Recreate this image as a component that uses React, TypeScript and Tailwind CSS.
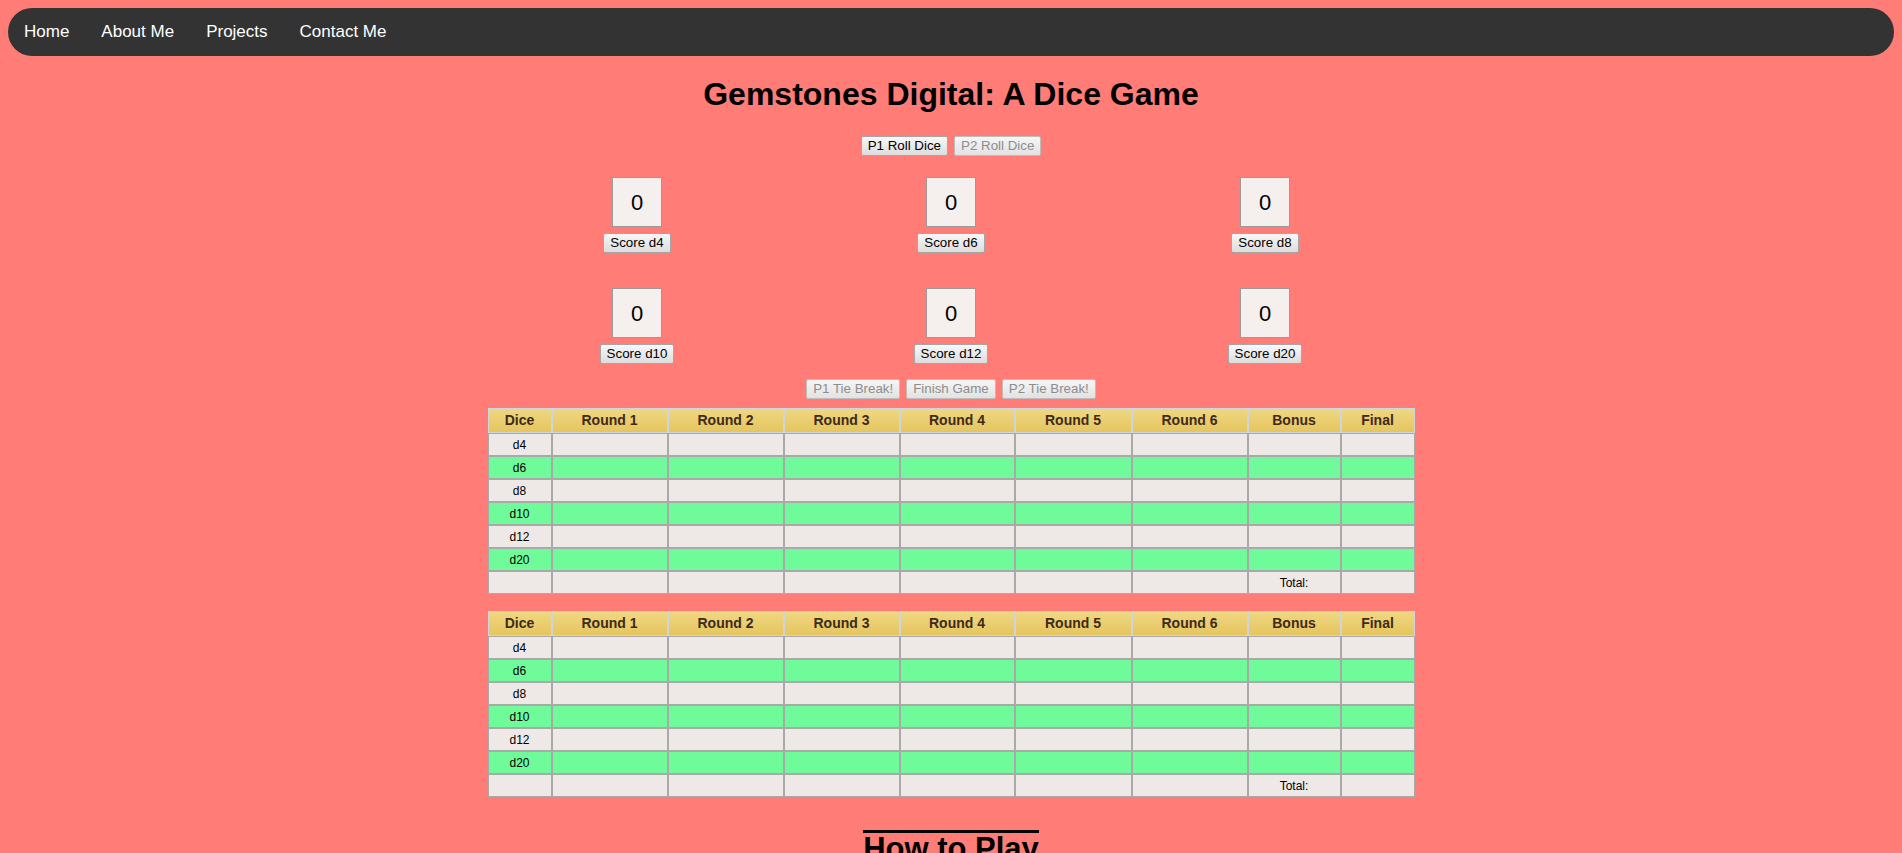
const links = ['Home', 'About Me', 'Projects', 'Contact Me']
const dice = ['d4', 'd6', 'd8', 'd10', 'd12', 'd20']
const rounds = ['Round 1', 'Round 2', 'Round 3', 'Round 4', 'Round 5', 'Round 6']

const btn =
  'rounded-[2px] border border-[#a6a6a6] bg-linear-to-b from-[#f8f8f8] to-[#dcdcdc] px-1.5 py-px text-[13.33px] leading-[16px] text-black'
const btnOff =
  'rounded-[2px] border border-[#bdbdbd] bg-linear-to-b from-[#f6f6f6] to-[#e2e2e2] px-1.5 py-px text-[13.33px] leading-[16px] text-[#8d8d8d]'

function DieSlot({ label }: { label: string }) {
  return (
    <div className="flex flex-col items-center">
      <div className="flex h-[50px] w-[50px] items-center justify-center border border-[#9a9a9a] bg-[#f5efed] text-[22px] text-black">
        0
      </div>
      <button className={`mt-1.5 ${btn}`}>Score {label}</button>
    </div>
  )
}

function ScoreTable() {
  const th =
    'h-[25px] border border-[#cdd5df] bg-linear-to-b from-[#efd782] to-[#e5c55d] p-0 text-[14px] font-bold text-[#3f2a1a]'
  const td = 'h-[23px] border border-[#a9a9a9] p-0 text-center text-[12px] text-black'
  return (
    <table className="mx-auto w-[927px] table-fixed border-separate border-spacing-0">
      <colgroup>
        <col className="w-[64px]" />
        <col className="w-[116px]" />
        <col className="w-[116px]" />
        <col className="w-[116px]" />
        <col className="w-[115px]" />
        <col className="w-[117px]" />
        <col className="w-[116px]" />
        <col className="w-[93px]" />
        <col className="w-[74px]" />
      </colgroup>
      <thead>
        <tr>
          <th className={th}>Dice</th>
          {rounds.map((r) => (
            <th key={r} className={th}>
              {r}
            </th>
          ))}
          <th className={th}>Bonus</th>
          <th className={th}>Final</th>
        </tr>
      </thead>
      <tbody>
        {dice.map((d, i) => {
          const bg = i % 2 === 1 ? 'bg-[#70fb9a]' : 'bg-[#eee9e6]'
          return (
            <tr key={d}>
              <td className={`${td} ${bg}`}>{d}</td>
              {Array.from({ length: 8 }).map((_, j) => (
                <td key={j} className={`${td} ${bg}`} />
              ))}
            </tr>
          )
        })}
        <tr>
          {Array.from({ length: 7 }).map((_, j) => (
            <td key={j} className={`${td} bg-[#eee9e6]`} />
          ))}
          <td className={`${td} bg-[#eee9e6]`}>Total:</td>
          <td className={`${td} bg-[#eee9e6]`} />
        </tr>
      </tbody>
    </table>
  )
}

export default function App() {
  return (
    <div className="min-h-screen bg-[#ff7d76] p-2 font-['Liberation_Sans',Arial,sans-serif]">
      <nav className="flex h-12 items-center rounded-full bg-[#333333]">
        {links.map((l) => (
          <a key={l} href="#" className="px-4 text-[17px] text-white">
            {l}
          </a>
        ))}
      </nav>

      <h1 className="mt-5 text-center text-[32px] leading-[37px] font-bold text-black">
        Gemstones Digital: A Dice Game
      </h1>

      <div className="mt-[23px] flex justify-center gap-[6px]">
        <button className={btn}>P1 Roll Dice</button>
        <button className={btnOff} disabled>
          P2 Roll Dice
        </button>
      </div>

      <div className="mx-auto mt-[21px] grid w-[942px] grid-cols-3 gap-y-[35px]">
        {dice.map((d) => (
          <DieSlot key={d} label={d} />
        ))}
      </div>

      <div className="mt-[15px] flex justify-center gap-[6px]">
        <button className={btnOff} disabled>
          P1 Tie Break!
        </button>
        <button className={btnOff} disabled>
          Finish Game
        </button>
        <button className={btnOff} disabled>
          P2 Tie Break!
        </button>
      </div>

      <div className="mt-[9px]">
        <ScoreTable />
      </div>
      <div className="mt-[17px]">
        <ScoreTable />
      </div>

      <div className="mt-[33px] text-center">
        <h2 className="inline-block border-t-[3px] border-black text-[31px] leading-none font-bold text-black">
          How to Play
        </h2>
        <p className="mx-auto mt-4 max-w-3xl pb-10 text-[16px] text-black">
          Each player rolls six dice per round and scores one die at a time. After six rounds, the
          highest total wins.
        </p>
      </div>
    </div>
  )
}
